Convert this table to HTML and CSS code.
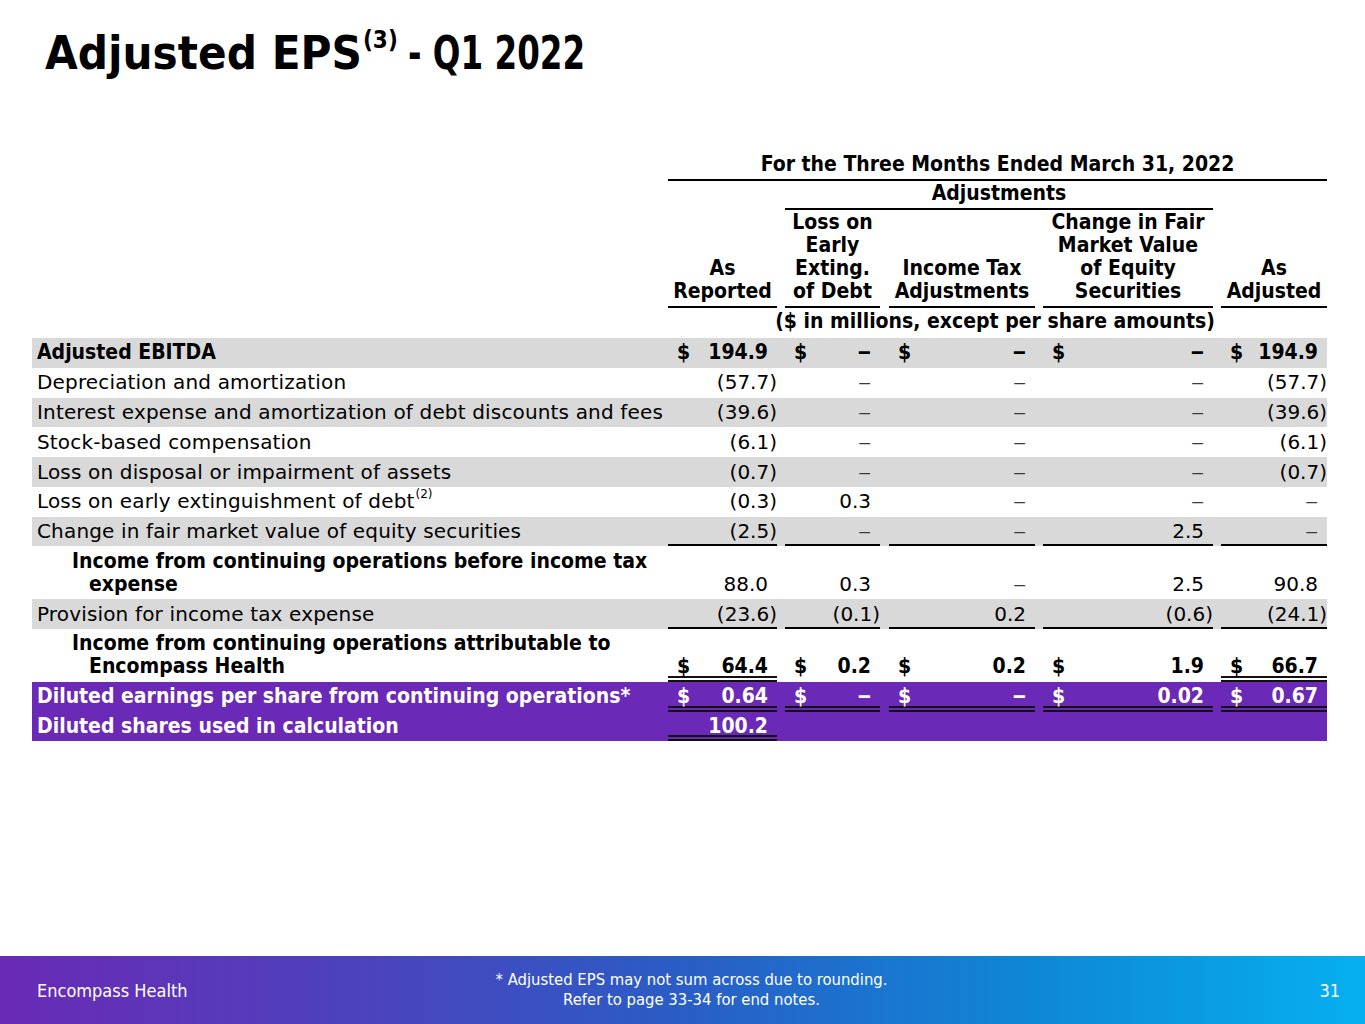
FILE: index.html
```html
<!DOCTYPE html>
<html lang="en">
<head>
<meta charset="utf-8">
<title>Adjusted EPS - Q1 2022</title>
<link rel="stylesheet" href="styles.css">
</head>
<body>
<div class="slide">
  <main class="main">
    <h1 class="title">Adjusted EPS<sup>(3)</sup> <span class="t-tail">- Q1 2022</span></h1>
    <table class="fin">
      <colgroup>
        <col class="c-label"><col class="c1"><col class="c2"><col class="c3"><col class="c4"><col class="c5">
      </colgroup>
      <thead>
        <tr class="h1r">
          <td></td>
          <td colspan="5" class="p0"><div class="hd hline">For the Three Months Ended March 31, 2022</div></td>
        </tr>
        <tr class="h2r">
          <td></td><td></td>
          <td colspan="3" class="gap8"><div class="hd hline">Adjustments</div></td>
          <td></td>
        </tr>
        <tr class="h3r">
          <td></td>
          <td class="p0"><div class="hd hline">As<br>Reported</div></td>
          <td class="gap8"><div class="hd hline">Loss on<br>Early<br>Exting.<br>of Debt</div></td>
          <td class="gap9"><div class="hd hline">Income Tax<br>Adjustments</div></td>
          <td class="gap8"><div class="hd hline">Change in Fair<br>Market Value<br>of Equity<br>Securities</div></td>
          <td class="gap8"><div class="hd hline">As<br>Adjusted</div></td>
        </tr>
        <tr class="h4r">
          <td></td><td></td>
          <td colspan="3" class="p0"><div class="units">($ in millions, except per share amounts)</div></td>
          <td></td>
        </tr>
      </thead>
      <tbody>
        <tr class="g b">
          <td class="lbl">Adjusted EBITDA</td>
          <td class="p0"><div class="v"><span>$</span><span class="pos">194.9</span></div></td>
          <td class="gap8"><div class="v"><span>$</span><span class="pos">‒</span></div></td>
          <td class="gap9"><div class="v"><span>$</span><span class="pos">‒</span></div></td>
          <td class="gap8"><div class="v"><span>$</span><span class="pos">‒</span></div></td>
          <td class="gap8"><div class="v"><span>$</span><span class="pos">194.9</span></div></td>
        </tr>
        <tr>
          <td class="lbl">Depreciation and amortization</td>
          <td class="p0"><div class="v r"><span>(57.7)</span></div></td>
          <td class="gap8"><div class="v r"><span class="pos dash">‒</span></div></td>
          <td class="gap9"><div class="v r"><span class="pos dash">‒</span></div></td>
          <td class="gap8"><div class="v r"><span class="pos dash">‒</span></div></td>
          <td class="gap8"><div class="v r"><span>(57.7)</span></div></td>
        </tr>
        <tr class="g">
          <td class="lbl">Interest expense and amortization of debt discounts and fees</td>
          <td class="p0"><div class="v r"><span>(39.6)</span></div></td>
          <td class="gap8"><div class="v r"><span class="pos dash">‒</span></div></td>
          <td class="gap9"><div class="v r"><span class="pos dash">‒</span></div></td>
          <td class="gap8"><div class="v r"><span class="pos dash">‒</span></div></td>
          <td class="gap8"><div class="v r"><span>(39.6)</span></div></td>
        </tr>
        <tr>
          <td class="lbl">Stock-based compensation</td>
          <td class="p0"><div class="v r"><span>(6.1)</span></div></td>
          <td class="gap8"><div class="v r"><span class="pos dash">‒</span></div></td>
          <td class="gap9"><div class="v r"><span class="pos dash">‒</span></div></td>
          <td class="gap8"><div class="v r"><span class="pos dash">‒</span></div></td>
          <td class="gap8"><div class="v r"><span>(6.1)</span></div></td>
        </tr>
        <tr class="g">
          <td class="lbl">Loss on disposal or impairment of assets</td>
          <td class="p0"><div class="v r"><span>(0.7)</span></div></td>
          <td class="gap8"><div class="v r"><span class="pos dash">‒</span></div></td>
          <td class="gap9"><div class="v r"><span class="pos dash">‒</span></div></td>
          <td class="gap8"><div class="v r"><span class="pos dash">‒</span></div></td>
          <td class="gap8"><div class="v r"><span>(0.7)</span></div></td>
        </tr>
        <tr>
          <td class="lbl">Loss on early extinguishment of debt<sup>(2)</sup></td>
          <td class="p0"><div class="v r"><span>(0.3)</span></div></td>
          <td class="gap8"><div class="v r"><span class="pos">0.3</span></div></td>
          <td class="gap9"><div class="v r"><span class="pos dash">‒</span></div></td>
          <td class="gap8"><div class="v r"><span class="pos dash">‒</span></div></td>
          <td class="gap8"><div class="v r"><span class="pos dash">‒</span></div></td>
        </tr>
        <tr class="g">
          <td class="lbl">Change in fair market value of equity securities</td>
          <td class="p0"><div class="v r u"><span>(2.5)</span></div></td>
          <td class="gap8"><div class="v r u"><span class="pos dash">‒</span></div></td>
          <td class="gap9"><div class="v r u"><span class="pos dash">‒</span></div></td>
          <td class="gap8"><div class="v r u"><span class="pos">2.5</span></div></td>
          <td class="gap8"><div class="v r u"><span class="pos dash">‒</span></div></td>
        </tr>
        <tr>
          <td class="lbl ind bx">Income from continuing operations before income tax expense</td>
          <td class="p0"><div class="v r"><span class="pos">88.0</span></div></td>
          <td class="gap8"><div class="v r"><span class="pos">0.3</span></div></td>
          <td class="gap9"><div class="v r"><span class="pos dash">‒</span></div></td>
          <td class="gap8"><div class="v r"><span class="pos">2.5</span></div></td>
          <td class="gap8"><div class="v r"><span class="pos">90.8</span></div></td>
        </tr>
        <tr class="g">
          <td class="lbl">Provision for income tax expense</td>
          <td class="p0"><div class="v r u"><span>(23.6)</span></div></td>
          <td class="gap8"><div class="v r u"><span>(0.1)</span></div></td>
          <td class="gap9"><div class="v r u"><span class="pos">0.2</span></div></td>
          <td class="gap8"><div class="v r u"><span>(0.6)</span></div></td>
          <td class="gap8"><div class="v r u"><span>(24.1)</span></div></td>
        </tr>
        <tr class="b">
          <td class="lbl ind">Income from continuing operations attributable to Encompass Health</td>
          <td class="p0"><div class="v dbl"><span>$</span><span class="pos">64.4</span></div></td>
          <td class="gap8"><div class="v"><span>$</span><span class="pos">0.2</span></div></td>
          <td class="gap9"><div class="v"><span>$</span><span class="pos">0.2</span></div></td>
          <td class="gap8"><div class="v"><span>$</span><span class="pos">1.9</span></div></td>
          <td class="gap8"><div class="v dbl"><span>$</span><span class="pos">66.7</span></div></td>
        </tr>
        <tr class="p b">
          <td class="lbl">Diluted earnings per share from continuing operations*</td>
          <td class="p0"><div class="v dbl"><span>$</span><span class="pos">0.64</span></div></td>
          <td class="gap8"><div class="v dbl"><span>$</span><span class="pos">‒</span></div></td>
          <td class="gap9"><div class="v dbl"><span>$</span><span class="pos">‒</span></div></td>
          <td class="gap8"><div class="v dbl"><span>$</span><span class="pos">0.02</span></div></td>
          <td class="gap8"><div class="v dbl"><span>$</span><span class="pos">0.67</span></div></td>
        </tr>
        <tr class="p b">
          <td class="lbl">Diluted shares used in calculation</td>
          <td class="p0"><div class="v r dbl"><span class="pos">100.2</span></div></td>
          <td class="gap8"></td>
          <td class="gap9"></td>
          <td class="gap8"></td>
          <td class="gap8"></td>
        </tr>
      </tbody>
    </table>
  </main>
  <footer class="footer">
    <div class="f-left">Encompass Health</div>
    <div class="f-center">* Adjusted EPS may not sum across due to rounding.<br>Refer to page 33-34 for end notes.</div>
    <div class="f-right">31</div>
  </footer>
</div>
</body>
</html>
```

FILE: styles.css
```css
html, body {
  margin: 0;
  padding: 0;
  background: #fff;
}

body {
  font-family: "DejaVu Sans Condensed", "DejaVu Sans", sans-serif;
  font-stretch: condensed;
  color: #000;
}

.slide {
  width: 1365px;
  height: 1024px;
  display: flex;
  flex-direction: column;
  overflow: hidden;
}

.main {
  flex: 1;
}

/* ---------- Title ---------- */
.title {
  margin: 0;
  padding: 25px 0 0 45px;
  font-size: 47px;
  line-height: 56px;
  font-weight: bold;
  white-space: nowrap;
}

.title sup {
  font-size: 24px;
  line-height: 0;
  vertical-align: 0;
  position: relative;
  top: -21px;
  margin-left: 1px;
}

.t-tail {
  display: inline-block;
  margin-left: -4px;
  transform: scaleX(0.77);
  transform-origin: left center;
}

/* ---------- Table ---------- */
.fin {
  margin: 71px 0 0 32px;
  width: 1295px;
  table-layout: fixed;
  border-collapse: collapse;
  border-spacing: 0;
  font-family: "DejaVu Sans", sans-serif;
  font-stretch: normal;
  font-size: 20px;
}

.c-label { width: 636px; }
.c1 { width: 109px; }
.c2 { width: 103px; }
.c3 { width: 155px; }
.c4 { width: 178px; }
.c5 { width: 114px; }

.fin td {
  padding: 0;
  vertical-align: bottom;
}

.fin td.gap8 { padding-left: 8px; }
.fin td.gap9 { padding-left: 9px; }
.fin td.p0 { padding-left: 0; }

/* bold text uses the condensed bold face */
.hd,
.units,
tr.b td,
td.bx {
  font-family: "DejaVu Sans Condensed", "DejaVu Sans", sans-serif;
  font-stretch: condensed;
  font-weight: bold;
  font-size: 21px;
  letter-spacing: 0;
}

.hd {
  text-align: center;
  line-height: 23px;
  padding: 1px 0 3px;
  white-space: nowrap;
}

.hline {
  border-bottom: 2px solid #000;
}

.units {
  display: flex;
  justify-content: center;
  white-space: nowrap;
  line-height: 23px;
  padding: 2px 0 5px;
}

.lbl {
  line-height: 23px;
  padding: 3.4px 0 3.4px 5px !important;
  white-space: nowrap;
  letter-spacing: 0.16px;
}

.lbl.ind {
  white-space: normal;
  padding-left: 57px !important;
  padding-right: 8px !important;
  text-indent: -17px;
}

.lbl sup {
  font-size: 12px;
  line-height: 0;
  position: relative;
  top: -3px;
  margin-left: 1px;
  letter-spacing: 0;
}

.v {
  display: flex;
  justify-content: space-between;
  line-height: 23px;
  padding: 3.4px 0;
  white-space: nowrap;
}

.v.r {
  justify-content: flex-end;
}

.v span:first-child {
  padding-left: 9px;
}

.v.r span:first-child {
  padding-left: 0;
}

.pos {
  padding-right: 9px;
}

.dash {
  color: #3a3a3a;
}

.u {
  background: linear-gradient(#000, #000) 0 100% / 100% 2px no-repeat;
}

.dbl {
  background-image: linear-gradient(#111, #111), linear-gradient(#111, #111);
  background-size: 100% 2px, 100% 2px;
  background-position: 0 100%, 0 calc(100% - 4px);
  background-repeat: no-repeat;
}

tr.g td {
  background: #d9d9d9;
}

tr.p td {
  background: #6a29b6;
  color: #fff;
}

/* ---------- Footer ---------- */
.footer {
  height: 68px;
  flex: none;
  display: grid;
  grid-template-columns: 1fr auto 1fr;
  align-items: center;
  background: linear-gradient(90deg, #6a2ab5 0%, #4a44be 28%, #2a5dc6 50%, #0f86d6 75%, #06b0f0 100%);
  color: #fff;
  padding: 0 25px 0 37px;
}

.f-left {
  font-size: 18px;
}

.f-center {
  font-size: 16.5px;
  line-height: 20px;
  text-align: center;
  padding-left: 6px;
}

.f-right {
  text-align: right;
  font-size: 18px;
}
```
